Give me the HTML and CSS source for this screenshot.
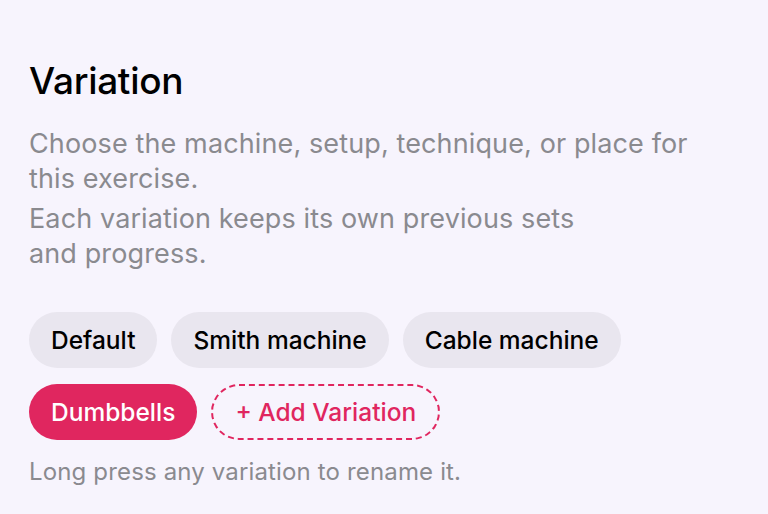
FILE: index.html
```html
<!DOCTYPE html>
<html>
<head>
<meta charset="utf-8">
<link rel="stylesheet" href="styles.css">
</head>
<body>
<main class="section">
  <h1 class="title">Variation</h1>
  <p class="desc">Choose the machine, setup, technique, or place for this exercise.</p>
  <p class="desc desc-narrow">Each variation keeps its own previous sets and progress.</p>
  <div class="chips">
    <span class="chip">Default</span>
    <span class="chip">Smith machine</span>
    <span class="chip">Cable machine</span>
    <span class="chip chip-active">Dumbbells</span>
    <span class="chip chip-add">+ Add Variation</span>
  </div>
  <p class="hint">Long press any variation to rename it.</p>
</main>
</body>
</html>
```
FILE: styles.css
```css
* { box-sizing: border-box; }
html, body {
  margin: 0;
  background: #f7f4fd;
  font-family: Inter, "Noto Sans", sans-serif;
}
.section {
  padding: 58px 29px 0 29px;
}
.title {
  margin: 0;
  font-size: 37px;
  font-weight: 500;
  color: #000;
  line-height: 46px;
  letter-spacing: -0.3px;
}
.desc {
  margin: 22px 0 0 0;
  font-size: 27px;
  line-height: 35px;
  color: #8a8a8f;
  letter-spacing: 0.12px;
  max-width: 700px;
}
.desc + .desc { margin-top: 5px; }
.desc-narrow { max-width: 560px; }
.chips {
  display: flex;
  flex-wrap: wrap;
  gap: 16px 14px;
  margin-top: 41px;
  max-width: 640px;
}
.chip {
  height: 56px;
  padding: 0 22px;
  border-radius: 28px;
  background: #e9e6ef;
  color: #000;
  font-size: 24.5px;
  font-weight: 500;
  display: flex;
  align-items: center;
}
.chip-active {
  background: #e0265f;
  color: #fff;
}
.chip-add {
  background: transparent;
  border: 2.5px dashed #e0265f;
  color: #e0265f;
  font-weight: 500;
}
.hint {
  margin: 16px 0 0 0;
  font-size: 24px;
  line-height: 32px;
  letter-spacing: 0.15px;
  color: #8a8a8f;
}
```
